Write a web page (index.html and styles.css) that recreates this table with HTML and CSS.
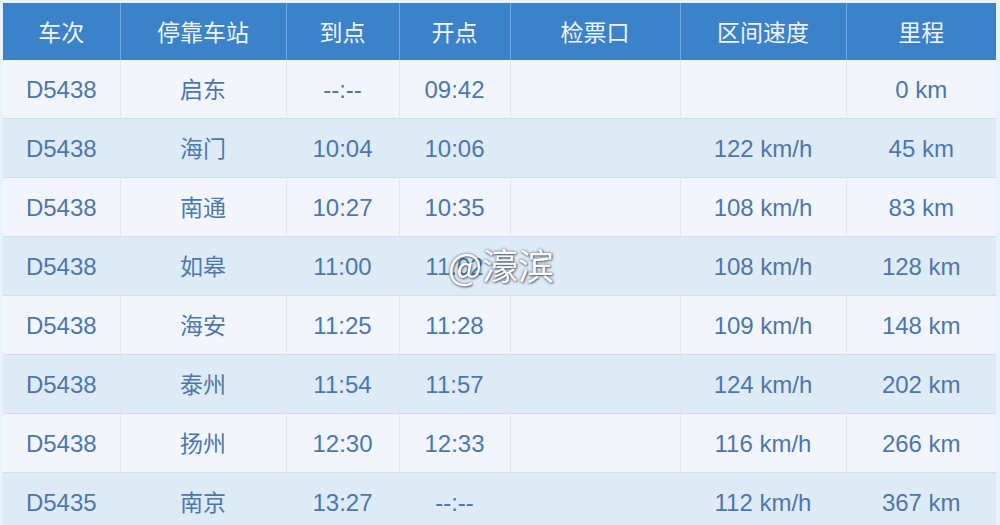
FILE: index.html
```html
<!DOCTYPE html>
<html lang="zh">
<head>
<meta charset="utf-8">
<link rel="stylesheet" href="styles.css">
</head>
<body>
<div class="frame">
<table class="timetable">
<colgroup>
<col class="c1"><col class="c2"><col class="c3"><col class="c4"><col class="c5"><col class="c6"><col class="c7">
</colgroup>
<thead>
<tr><th>车次</th><th>停靠车站</th><th>到点</th><th>开点</th><th>检票口</th><th>区间速度</th><th>里程</th></tr>
</thead>
<tbody>
<tr><td>D5438</td><td>启东</td><td>--:--</td><td>09:42</td><td></td><td></td><td>0 km</td></tr>
<tr><td>D5438</td><td>海门</td><td>10:04</td><td>10:06</td><td></td><td>122 km/h</td><td>45 km</td></tr>
<tr><td>D5438</td><td>南通</td><td>10:27</td><td>10:35</td><td></td><td>108 km/h</td><td>83 km</td></tr>
<tr><td>D5438</td><td>如皋</td><td>11:00</td><td>11:02</td><td></td><td>108 km/h</td><td>128 km</td></tr>
<tr><td>D5438</td><td>海安</td><td>11:25</td><td>11:28</td><td></td><td>109 km/h</td><td>148 km</td></tr>
<tr><td>D5438</td><td>泰州</td><td>11:54</td><td>11:57</td><td></td><td>124 km/h</td><td>202 km</td></tr>
<tr><td>D5438</td><td>扬州</td><td>12:30</td><td>12:33</td><td></td><td>116 km/h</td><td>266 km</td></tr>
<tr><td>D5435</td><td>南京</td><td>13:27</td><td>--:--</td><td></td><td>112 km/h</td><td>367 km</td></tr>
</tbody>
</table>
<div class="watermark">@濠滨</div>
</div>
</body>
</html>
```

FILE: styles.css
```css
html, body {
  margin: 0;
  padding: 0;
  background: #e8f3fb;
  overflow: hidden;
}
.frame {
  position: relative;
  padding: 3px 4px 0 3px;
  font-family: "Liberation Sans", "Noto Sans CJK SC", sans-serif;
}
.timetable {
  width: 993px;
  border-collapse: collapse;
  table-layout: fixed;
}
.c1 { width: 117px; }
.c2 { width: 166px; }
.c3 { width: 113px; }
.c4 { width: 111px; }
.c5 { width: 170px; }
.c6 { width: 166px; }
.c7 { width: 150px; }
.timetable th {
  height: 55px;
  padding: 0 0 2px 0;
  background: #3b82c9;
  color: #eef4fb;
  font-family: "Noto Sans CJK SC", sans-serif;
  font-weight: 400;
  font-size: 23px;
  line-height: 24px;
  border-left: 1px solid #6ea8dd;
  text-align: center;
  vertical-align: middle;
}
.timetable th:first-child { border-left: none; }
.timetable td {
  height: 56px;
  padding: 2px 0 0 0;
  text-align: center;
  vertical-align: middle;
  font-size: 24px;
  line-height: 24px;
  color: #4c77ad;
  border-left: 1px solid #dfe7f0;
  border-top: 1px solid #d3dfea;
}
.timetable td:first-child { border-left: none; }
.timetable tbody tr:nth-child(odd) td { background: #f2f6fc; }
.timetable tbody tr:nth-child(even) td { background: #deebf6; }
.timetable tbody tr:first-child td { border-top: none; }
.timetable td:nth-child(2) {
  font-family: "Noto Sans CJK SC", sans-serif;
  font-size: 23px;
  padding: 0 0 2px 0;
}
.watermark {
  position: absolute;
  left: 448px;
  top: 238px;
  font-family: "Noto Sans CJK SC", sans-serif;
  font-size: 36px;
  color: #ffffff;
  text-shadow: 0 0 3px rgba(40, 50, 70, 0.75), 1px 1px 2px rgba(40, 50, 70, 0.6);
}
```
